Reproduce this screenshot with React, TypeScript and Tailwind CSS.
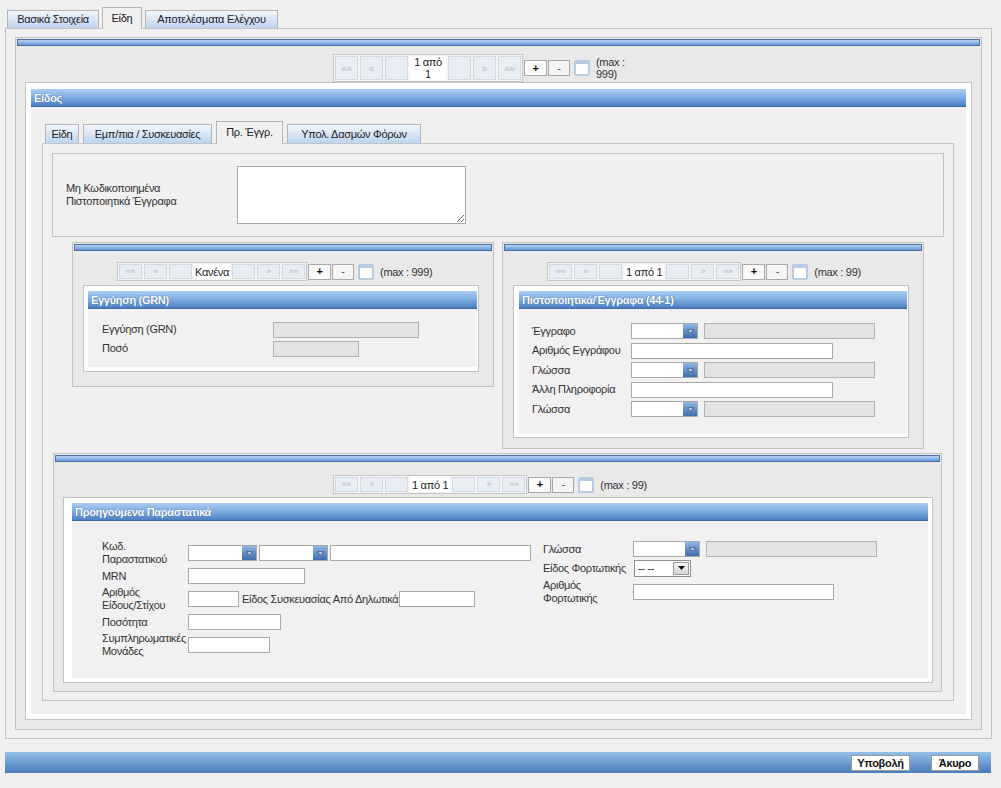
import React from "react";

type Kids = { children?: React.ReactNode };

function Header({ title }: { title: string }) {
  return (
    <div className="h-[18px] shrink-0 border-b border-[#3d69a5] bg-linear-to-b from-[#abcdf0] via-[#7eace2] to-[#4c7fc2] pl-[3px] text-[11px] font-bold leading-[18px] text-white [text-shadow:0_0_1px_#2a4f80]">
      {title}
    </div>
  );
}

function Bar() {
  return <div className="mx-px mt-px h-[7px] shrink-0 border border-[#4a70a5] bg-linear-to-b from-[#b7d3f1] to-[#6a9ad4]" />;
}

function Nav({ children, big }: Kids & { big?: boolean }) {
  return (
    <div
      className={
        big
          ? "flex w-[23px] items-center justify-center border border-[#d2d9e1] bg-[#e8eef4] text-[10px] text-[#b3bcc6]"
          : "flex w-[23px] items-center justify-center border border-[#d2d9e1] bg-[#e8eef4] text-[9px] text-[#b3bcc6]"
      }
    >
      {children}
    </div>
  );
}

function Pager({ label, max, big, pad, labelCls }: { label: React.ReactNode; max: React.ReactNode; big?: boolean; pad: string; labelCls: string }) {
  return (
    <div className={`flex items-center ${pad}`}>
      <div className={big ? "flex h-[28px] gap-[2px] border border-[#c6c6c6] bg-[#f5f5f5] p-px" : "flex h-[19px] gap-[2px] border border-[#c6c6c6] bg-[#f5f5f5] p-px"}>
        <Nav big={big}>««</Nav>
        <Nav big={big}>«</Nav>
        <Nav big={big} />
        <div className={`flex items-center bg-white text-[11px] leading-[12px] text-[#222] ${labelCls}`}>{label}</div>
        <Nav big={big} />
        <Nav big={big}>»</Nav>
        <Nav big={big}>»»</Nav>
      </div>
      <div className="ml-[1px] flex h-[16px] w-[23px] items-center justify-center border border-[#a9a9a9] bg-[#fafafa] text-[11px] font-bold text-[#111]">+</div>
      <div className="ml-[1px] flex h-[16px] w-[22px] items-center justify-center border border-[#a9a9a9] bg-[#f4f4f4] text-[11px] text-[#555]">-</div>
      <div className="ml-[4px] h-[16px] w-[16px] rounded-[2px] border-2 border-t-[4px] border-[#b7cbe2] bg-white" />
      <div className="ml-[6px] whitespace-nowrap text-[11px] leading-[12px] text-[#333]">{max}</div>
    </div>
  );
}

function Box({ title, cls, children }: Kids & { title: string; cls: string }) {
  return (
    <div className={`border border-[#c2c2c2] bg-white ${cls}`}>
      <div className="flex h-full flex-col bg-[#f1f1f1]">
        <Header title={title} />
        {children}
      </div>
    </div>
  );
}

function Txt({ cls }: { cls: string }) {
  return <input type="text" className={`h-[16px] border border-[#a9a9a9] bg-white outline-none ${cls}`} />;
}

function Gray({ cls }: { cls: string }) {
  return <div className={`h-[16px] border border-[#b3b3b3] bg-[#e3e3e3] ${cls}`} />;
}

function Sel({ cls = "w-[67px]" }: { cls?: string }) {
  return (
    <div className={`flex h-[16px] border border-[#a9a9a9] bg-white ${cls}`}>
      <div className="flex-1" />
      <div className="flex w-[14px] items-center justify-center bg-linear-to-b from-[#8fb7e5] to-[#3e6dae]">
        <svg width="7" height="5" viewBox="0 0 7 5">
          <path d="M0.5 0.8h6L3.5 4.2z" fill="#dfe7f2" stroke="#24395c" strokeWidth="0.7" />
        </svg>
      </div>
    </div>
  );
}

function Lbl({ children }: Kids) {
  return <div className="text-[11px] leading-[13px] text-[#333]">{children}</div>;
}

export default function App() {
  return (
    <div className="h-[788px] w-[1001px] overflow-hidden bg-[#f0f0f0] px-[5px] pt-[7px] font-['Liberation_Sans',Arial,sans-serif] tracking-[-0.3px]">
      {/* main tabs */}
      <div className="relative z-10 flex h-[21px] items-end gap-[3px] pl-[2px]">
        <div className="h-[18px] w-[92px] border border-b-0 border-[#b5b5b5] bg-linear-to-b from-[#f3f7fc] to-[#bdd4ef] text-center text-[11px] leading-[17px] text-[#222]">Βασικά Στοιχεία</div>
        <div className="-mb-px h-[22px] w-[40px] border border-b-0 border-[#b5b5b5] bg-[#f0f0f0] text-center text-[11px] leading-[20px] text-[#222]">Είδη</div>
        <div className="h-[18px] w-[133px] border border-b-0 border-[#b5b5b5] bg-linear-to-b from-[#f3f7fc] to-[#bdd4ef] text-center text-[11px] leading-[17px] text-[#222]">Αποτελέσματα Ελέγχου</div>
      </div>

      {/* P1 */}
      <div className="flex h-[711px] w-[987px] flex-col border border-[#c4c4c4] bg-[#f0f0f0] px-[9px] py-[8px]">
        {/* P2 */}
        <div className="flex flex-1 flex-col border border-[#c4c4c4] bg-[#e9e9e9]">
          <Bar />
          <div className="mt-[8px]">
            <Pager
              big
              pad="pl-[317px]"
              labelCls="w-[36px] justify-center text-center"
              label={<span>1 από<br />1</span>}
              max={<span>(max :<br />999)</span>}
            />
          </div>
          {/* P3 */}
          <div className="mx-[9px] mb-[9px] flex flex-1 flex-col border border-[#c4c4c4] bg-white px-[5px] pb-[5px] pt-[6px]">
            <div className="flex flex-1 flex-col bg-[#f0f0f0]">
              <Header title="Είδος" />
              {/* sub tabs */}
              <div className="relative z-10 ml-[11px] mt-[14px] flex h-[22px] items-end gap-[4px] pl-[3px]">
                <div className="h-[19px] w-[34px] border border-b-0 border-[#b5b5b5] bg-linear-to-b from-[#f3f7fc] to-[#bdd4ef] text-center text-[11px] leading-[18px] text-[#222]">Είδη</div>
                <div className="h-[19px] w-[129px] border border-b-0 border-[#b5b5b5] bg-linear-to-b from-[#f3f7fc] to-[#bdd4ef] text-center text-[11px] leading-[18px] text-[#222]">Εμπ/πια / Συσκευασίες</div>
                <div className="-mb-px h-[23px] w-[67px] border border-b-0 border-[#b5b5b5] bg-[#f0f0f0] text-center text-[11px] leading-[21px] text-[#222]">Πρ. Έγγρ.</div>
                <div className="h-[19px] w-[134px] border border-b-0 border-[#b5b5b5] bg-linear-to-b from-[#f3f7fc] to-[#bdd4ef] text-center text-[11px] leading-[18px] text-[#222]">Υπολ. Δασμών Φόρων</div>
              </div>

              {/* sub tab content */}
              <div className="mb-[13px] ml-[11px] mr-[12px] flex flex-1 flex-col border border-[#c4c4c4] bg-[#f0f0f0] px-[9px] pt-[9px]">
                <div className="flex h-[84px] items-center border border-[#c4c4c4] bg-[#f0f0f0] pl-[13px]">
                  <div className="w-[171px]">
                    <Lbl>Μη Κωδικοποιημένα<br />Πιστοποιητικά Έγγραφα</Lbl>
                  </div>
                  <textarea className="h-[58px] w-[229px] border border-[#a9a9a9] bg-white outline-none" />
                </div>

                {/* middle row */}
                <div className="mt-[5px] flex items-start gap-[8px] pl-[20px]">
                  <div className="flex h-[145px] w-[422px] flex-col border border-[#c4c4c4] bg-[#e9e9e9]">
                    <Bar />
                    <div className="mt-[11px]">
                      <Pager pad="pl-[44px]" labelCls="whitespace-nowrap px-px" label="Κανένα" max="(max : 999)" />
                    </div>
                    <Box title="Εγγύηση (GRN)" cls="ml-[10px] mt-[4px] h-[87px] w-[396px] pb-[4px] pl-[4px] pr-px pt-[5px]">
                      <div className="flex flex-col gap-[4px] pl-[14px] pt-[13px]">
                        <div className="flex h-[15px] items-center">
                          <div className="w-[171px]"><Lbl>Εγγύηση (GRN)</Lbl></div>
                          <Gray cls="h-[15px] w-[146px]" />
                        </div>
                        <div className="flex h-[15px] items-center">
                          <div className="w-[171px]"><Lbl>Ποσό</Lbl></div>
                          <Gray cls="h-[15px] w-[86px]" />
                        </div>
                      </div>
                    </Box>
                  </div>

                  <div className="flex h-[207px] w-[422px] flex-col border border-[#c4c4c4] bg-[#e9e9e9]">
                    <Bar />
                    <div className="mt-[11px]">
                      <Pager pad="pl-[44px]" labelCls="whitespace-nowrap px-[2px]" label="1 από 1" max="(max : 99)" />
                    </div>
                    <Box title="Πιστοποιητικά/Έγγραφα (44-1)" cls="ml-[10px] mt-[4px] h-[153px] w-[396px] pb-[4px] pl-[5px] pr-px pt-[5px]">
                      <div className="flex flex-col gap-[3.5px] pl-[13px] pt-[14px]">
                        <div className="flex h-[16px] items-center">
                          <div className="w-[99px]"><Lbl>Έγγραφο</Lbl></div>
                          <Sel />
                          <Gray cls="ml-[6px] w-[171px]" />
                        </div>
                        <div className="flex h-[16px] items-center">
                          <div className="w-[99px]"><Lbl>Αριθμός Εγγράφου</Lbl></div>
                          <Txt cls="w-[202px]" />
                        </div>
                        <div className="flex h-[16px] items-center">
                          <div className="w-[99px]"><Lbl>Γλώσσα</Lbl></div>
                          <Sel />
                          <Gray cls="ml-[6px] w-[171px]" />
                        </div>
                        <div className="flex h-[16px] items-center">
                          <div className="w-[99px]"><Lbl>Άλλη Πληροφορία</Lbl></div>
                          <Txt cls="w-[202px]" />
                        </div>
                        <div className="flex h-[16px] items-center">
                          <div className="w-[99px]"><Lbl>Γλώσσα</Lbl></div>
                          <Sel />
                          <Gray cls="ml-[6px] w-[171px]" />
                        </div>
                      </div>
                    </Box>
                  </div>
                </div>

                {/* lower panel */}
                <div className="ml-px mr-[2px] mt-[4px] flex h-[239px] flex-col border border-[#c4c4c4] bg-[#e9e9e9]">
                  <Bar />
                  <div className="mt-[13px]">
                    <Pager pad="pl-[279px]" labelCls="whitespace-nowrap px-[2px]" label="1 από 1" max="(max : 99)" />
                  </div>
                  <Box title="Προηγούμενα Παραστατικά" cls="ml-[9px] mt-[3px] h-[186px] w-[870px] pb-[4px] pl-[8px] pr-[4px] pt-[5px]">
                    <div className="flex pl-[30px] pt-[19px]">
                      <div className="flex w-[441px] flex-col gap-[2px]">
                        <div className="flex h-[26px] items-center">
                          <div className="w-[86px]"><Lbl>Κωδ.<br />Παραστατικού</Lbl></div>
                          <Sel cls="w-[69px]" />
                          <Sel cls="ml-[2px] w-[69px]" />
                          <Txt cls="ml-[2px] w-[201px]" />
                        </div>
                        <div className="flex h-[16px] items-center">
                          <div className="w-[86px]"><Lbl>MRN</Lbl></div>
                          <Txt cls="h-[15px] w-[117px]" />
                        </div>
                        <div className="flex h-[26px] items-center">
                          <div className="w-[86px]"><Lbl>Αριθμός<br />Είδους/Στίχου</Lbl></div>
                          <Txt cls="w-[51px]" />
                          <div className="ml-[3px] mr-px"><Lbl>Είδος Συσκευασίας Από Δηλωτικά</Lbl></div>
                          <Txt cls="w-[76px]" />
                        </div>
                        <div className="flex h-[16px] items-center">
                          <div className="w-[86px]"><Lbl>Ποσότητα</Lbl></div>
                          <Txt cls="w-[93px]" />
                        </div>
                        <div className="flex h-[26px] items-center">
                          <div className="w-[86px]"><Lbl>Συμπληρωματικές<br />Μονάδες</Lbl></div>
                          <Txt cls="w-[82px]" />
                        </div>
                      </div>

                      <div className="flex flex-col gap-[3px] pt-px">
                        <div className="flex h-[16px] items-center">
                          <div className="w-[90px]"><Lbl>Γλώσσα</Lbl></div>
                          <Sel />
                          <Gray cls="ml-[6px] w-[171px]" />
                        </div>
                        <div className="flex h-[16px] items-center">
                          <div className="w-[91px]"><Lbl>Είδος Φορτωτικής</Lbl></div>
                          <div className="flex h-[17px] w-[57px] border border-[#8f8f8f] bg-white">
                            <div className="flex-1 pl-[3px] text-[11px] leading-[15px] text-[#222]">-- --</div>
                            <div className="m-px flex w-[16px] items-center justify-center border border-[#9a9a9a] bg-linear-to-b from-[#f6f6f6] to-[#d4d4d4]">
                              <svg width="7" height="4" viewBox="0 0 7 4"><path d="M0 0h7L3.5 4z" fill="#111" /></svg>
                            </div>
                          </div>
                        </div>
                        <div className="flex h-[26px] items-center">
                          <div className="w-[90px]"><Lbl>Αριθμός<br />Φορτωτικής</Lbl></div>
                          <Txt cls="w-[201px]" />
                        </div>
                      </div>
                    </div>
                  </Box>
                </div>
              </div>
            </div>
          </div>
        </div>
      </div>

      {/* bottom bar */}
      <div className="mt-[13px] flex h-[21px] w-[986px] items-center justify-end gap-[21px] bg-linear-to-b from-[#95c0ea] to-[#4a7bbd] pr-[12px]">
        <button className="h-[16px] w-[59px] border border-[#9a9a9a] bg-white text-[11px] font-bold leading-[14px] text-[#111]">Υποβολή</button>
        <button className="h-[16px] w-[48px] border border-[#9a9a9a] bg-white text-[11px] font-bold leading-[14px] text-[#111]">Άκυρο</button>
      </div>
    </div>
  );
}
